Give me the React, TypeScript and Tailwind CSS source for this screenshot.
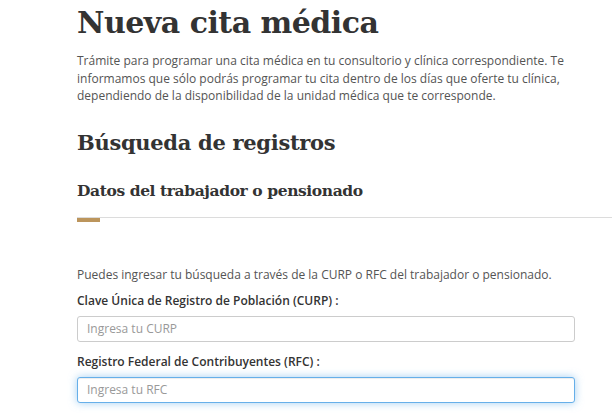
import React from "react";

const serif = { fontFamily: '"DejaVu Serif", serif' };

export default function App() {
  return (
    <div className="w-[612px] h-[413px] overflow-hidden bg-white" style={{ fontFamily: '"Open Sans", sans-serif' }}>
      <div className="pl-[77px]">
        <h1 className="text-[30px] leading-[36px] pt-[5px] font-bold text-[#333333] tracking-[-0.5px]" style={serif}>
          Nueva cita médica
        </h1>
        <p className="mt-[11px] text-[12px] leading-[17.5px] text-[#545454] whitespace-nowrap">
          Trámite para programar una cita médica en tu consultorio y clínica correspondiente. Te
          <br />
          informamos que sólo podrás programar tu cita dentro de los días que oferte tu clínica,
          <br />
          dependiendo de la disponibilidad de la unidad médica que te corresponde.
        </p>
        <h2 className="mt-[24px] text-[21px] leading-[28px] font-bold text-[#333333] tracking-[-0.3px]" style={serif}>
          Búsqueda de registros
        </h2>
        <h3 className="mt-[22px] text-[15.5px] leading-[24px] font-bold text-[#333333] tracking-[-0.4px]" style={serif}>
          Datos del trabajador o pensionado
        </h3>
        <div className="mt-[14px] border-t border-[#dcdcdc]" />
        <div className="w-[23px] h-[4px] bg-[#bc955c]" />
        <div className="pr-[37px]">
          <p className="mt-[44px] text-[12px] leading-[18px] text-[#545454]">
            Puedes ingresar tu búsqueda a través de la CURP o RFC del trabajador o pensionado.
          </p>
          <label className="block mt-[8px] text-[12px] leading-[18px] font-semibold text-[#333333]">
            Clave Única de Registro de Población (CURP) :
          </label>
          <input
            className="mt-[6px] block w-full h-[26px] px-[9px] text-[12px] text-[#333] border border-[#cccccc] rounded-[3px] placeholder:text-[#999999] outline-none bg-white"
            placeholder="Ingresa tu CURP"
          />
          <label className="block mt-[11px] text-[12px] leading-[18px] font-semibold text-[#333333]">
            Registro Federal de Contribuyentes (RFC) :
          </label>
          <input
            className="mt-[6px] block w-full h-[26px] px-[9px] text-[12px] text-[#333] border border-[#66afe9] rounded-[3px] placeholder:text-[#999999] outline-none bg-white shadow-[inset_0_1px_1px_rgba(0,0,0,0.075),0_0_8px_rgba(102,175,233,0.6)]"
            placeholder="Ingresa tu RFC"
          />
        </div>
      </div>
    </div>
  );
}
